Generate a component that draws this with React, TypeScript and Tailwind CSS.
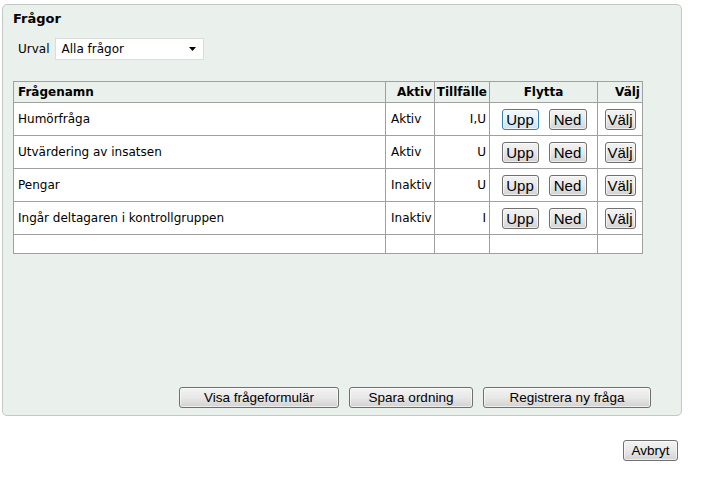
import React from "react";

const font = "font-['DejaVu_Sans',sans-serif]";
const btnBase =
  "h-[21px] rounded-[3px] border leading-none text-black font-['Liberation_Sans',Arial,sans-serif] bg-linear-to-b shadow-[inset_0_0_0_1px_rgba(255,255,255,0.6)]";
const btn = `${btnBase} border-[#707070] from-[#f3f3f3] via-[#e8e8e8] to-[#d2d2d2]`;
const btnFocus = `${btnBase} border-[#3c7fb1] from-[#f2f9fd] via-[#e3f1fb] to-[#c9e2f3]`;

const rows = [
  { name: "Humörfråga", aktiv: "Aktiv", tillfalle: "I,U" },
  { name: "Utvärdering av insatsen", aktiv: "Aktiv", tillfalle: "U" },
  { name: "Pengar", aktiv: "Inaktiv", tillfalle: "U" },
  { name: "Ingår deltagaren i kontrollgruppen", aktiv: "Inaktiv", tillfalle: "I" },
];

const cell = "border border-[#a0a0a0]";

export default function App() {
  return (
    <div className={`min-h-[481px] w-[707px] bg-white ${font} text-black`}>
      <div className="ml-[2px] pt-[4px]">
        <div className="flex h-[412px] w-[680px] flex-col rounded-[5px] border border-[#c4c8c5] bg-[#eaf0ec] pl-[10px] pt-[6px]">
          <h1 className="text-[13px] font-bold leading-[16px]">Frågor</h1>

          <div className="mt-[11px] flex items-center pl-[5px]">
            <span className="text-[12px]">Urval</span>
            <div className="ml-[5px] flex h-[22px] w-[149px] items-center justify-between border border-[#dcdcdc] bg-white pl-[6px] pr-[7px]">
              <span className="text-[12px]">Alla frågor</span>
              <svg width="7" height="4" viewBox="0 0 7 4">
                <path d="M0 0H7L3.5 4Z" fill="#000" />
              </svg>
            </div>
          </div>

          <table className="mt-[21px] w-[630px] table-fixed border-collapse border border-[#a0a0a0] text-[12px]">
            <colgroup>
              <col className="w-[372px]" />
              <col className="w-[49px]" />
              <col className="w-[55px]" />
              <col className="w-[108px]" />
              <col className="w-[45px]" />
            </colgroup>
            <thead>
              <tr className="h-[21px]">
                <th className={`${cell} pl-[4px] text-left font-bold`}>Frågenamn</th>
                <th className={`${cell} pr-[2px] text-right font-bold`}>Aktiv</th>
                <th className={`${cell} pr-[2px] text-right font-bold`}>Tillfälle</th>
                <th className={`${cell} text-center font-bold`}>Flytta</th>
                <th className={`${cell} pr-[2px] text-right font-bold`}>Välj</th>
              </tr>
            </thead>
            <tbody className="bg-white">
              {rows.map((r, i) => (
                <tr key={r.name} className="h-[33px]">
                  <td className={`${cell} pl-[4px]`}>{r.name}</td>
                  <td className={`${cell} pl-[5px]`}>{r.aktiv}</td>
                  <td className={`${cell} pr-[3px] text-right`}>{r.tillfalle}</td>
                  <td className={`${cell} text-center`}>
                    <div className="flex justify-center gap-[10px] pl-[1px]">
                      <button className={`${i === 0 ? btnFocus : btn} w-[37px] text-[15px]`}>Upp</button>
                      <button className={`${btn} w-[38px] text-[15px]`}>Ned</button>
                    </div>
                  </td>
                  <td className={`${cell} text-center`}>
                    <button className={`${btn} w-[31px] text-[15px]`}>Välj</button>
                  </td>
                </tr>
              ))}
              <tr className="h-[19px]">
                <td className={cell} />
                <td className={cell} />
                <td className={cell} />
                <td className={cell} />
                <td className={cell} />
              </tr>
            </tbody>
          </table>

          <div className="mt-auto mb-[7px] flex justify-end gap-[10px] pr-[30px]">
            <button className={`${btn} w-[160px] text-[13.5px]`}>Visa frågeformulär</button>
            <button className={`${btn} w-[124px] text-[13.5px]`}>Spara ordning</button>
            <button className={`${btn} w-[168px] text-[13.5px]`}>Registrera ny fråga</button>
          </div>
        </div>
      </div>

      <div className="mt-[24px] flex justify-end pr-[29px]">
        <button className={`${btn} w-[55px] text-[13.5px]`}>Avbryt</button>
      </div>
    </div>
  );
}
